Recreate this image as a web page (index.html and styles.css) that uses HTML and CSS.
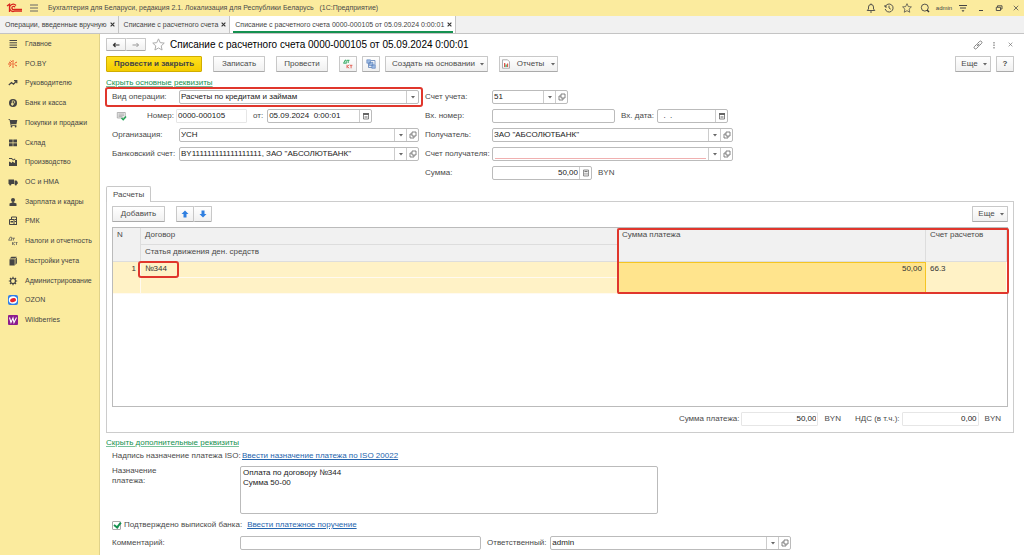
FILE: index.html
```html
<!DOCTYPE html>
<html lang="ru">
<head>
<meta charset="utf-8">
<meta name="viewport" content="width=device-width, initial-scale=1">
<title>Списание с расчетного счета</title>
<link rel="stylesheet" href="styles.css">
</head>
<body>
<svg class="sprite" aria-hidden="true">
  <symbol id="caret" viewBox="0 0 6 6"><path d="M1 2h4L3 4.400z" fill="#666"/></symbol>
  <symbol id="open" viewBox="0 0 8 8"><path d="M3 1h4v4H3zM3 3H1v4h4V5" fill="none" stroke="#666" stroke-width=".8"/></symbol>
  <symbol id="calendar" viewBox="0 0 8 8"><path d="M1.500 1.500h5v5.500h-5z" fill="none" stroke="#666" stroke-width=".8"/><path d="M1 1h6v2H1zM2.500 4h3v.6h-3zM2.500 5.400h3v.6h-3z" fill="#666"/></symbol>
  <symbol id="calc" viewBox="0 0 8 8"><path d="M1.500 1h5v6h-5z" fill="#eee" stroke="#777" stroke-width=".8"/><path d="M2.500 2h3v1h-3zM2.500 4h1v.7h-1zM4.500 4h1v.7h-1zM2.500 5.400h1v.7h-1zM4.500 5.400h1v.7h-1z" fill="#777"/></symbol>
  <symbol id="star" viewBox="0 0 12 12"><path d="M6 .8l1.600 3.500 3.700.4-2.800 2.600.8 3.800L6 9.200l-3.300 1.900.8-3.800L.7 4.700l3.700-.4z" fill="none" stroke="currentColor" stroke-width=".9"/></symbol>
  <symbol id="close" viewBox="0 0 8 8"><path d="M1 1l6 6M7 1L1 7" fill="none" stroke="currentColor"/></symbol>
  <symbol id="close-bold" viewBox="0 0 8 8"><path d="M1 1l6 6M7 1L1 7" fill="none" stroke="currentColor" stroke-width="1.800"/></symbol>
</svg>

<header class="titlebar">
  <svg class="logo" viewBox="0 0 17 10" role="img" aria-label="1С"><path d="M1 3l2.500-1.800V9M10 2.500A3.600 3.600 0 1 0 8.500 8.200H16M9 4.300A1.600 1.600 0 1 0 8 6.500h8" fill="none" stroke="#d9251d" stroke-width="1.300"/></svg>
  <button class="icon-btn" aria-label="Меню"><svg class="i10" viewBox="0 0 10 10"><path d="M1 2h8M1 5h8M1 8h8" stroke="#666" fill="none"/></svg></button>
  <span class="app-title">Бухгалтерия для Беларуси, редакция 2.1. Локализация для Республики Беларусь &nbsp; (1С:Предприятие)</span>
  <nav class="system">
    <button class="icon-btn" aria-label="Уведомления"><svg class="i10" viewBox="0 0 10 10"><path d="M1.200 7.500h7.600L7.500 6V4A2.500 2.500 0 0 0 5 1.500 2.500 2.500 0 0 0 2.500 4v2zM4 9h2M5 .5v1" fill="none" stroke="#444" stroke-width=".9"/></svg></button>
    <button class="icon-btn" aria-label="История"><svg class="i10" viewBox="0 0 10 10"><path d="M1 2v2h2M1.300 3.700A4 4 0 1 1 1.200 6M5 2.700V5l1.800 1.200" fill="none" stroke="#444" stroke-width=".9"/></svg></button>
    <button class="icon-btn" aria-label="Избранное"><svg class="i10"><use href="#star"/></svg></button>
    <button class="icon-btn" aria-label="Поиск"><svg class="i10" viewBox="0 0 10 10"><circle cx="4.800" cy="4.600" r="3.500" fill="none" stroke="#444" stroke-width=".9"/><path d="M7 7l2 2" stroke="#333" stroke-width="1.500"/></svg></button>
    <a class="user" href="#user">admin</a>
    <button class="icon-btn" aria-label="Настройка"><svg class="i10" viewBox="0 0 10 10"><path d="M1 2.500h8M2 5h6" stroke="#444" fill="none"/><path d="M3.500 7.200h3L5 9z" fill="#444"/></svg></button>
    <button class="icon-btn" aria-label="Свернуть"><svg class="i10" viewBox="0 0 10 10"><path d="M3 7.500h4" stroke="#444" fill="none"/></svg></button>
    <button class="icon-btn" aria-label="Восстановить"><svg class="i10" viewBox="0 0 10 10"><path d="M3.500 4V2.800H8V6H6.700M2.300 4.300h4.200v3.200H2.300z" fill="none" stroke="#444" stroke-width=".9"/></svg></button>
    <button class="icon-btn" aria-label="Закрыть"><svg class="i6"><use href="#close"/></svg></button>
  </nav>
</header>

<nav class="tabs">
  <div class="tab"><a href="#t1">Операции, введенные вручную</a><button class="tab-x" aria-label="Закрыть вкладку"><svg class="i5"><use href="#close-bold"/></svg></button></div>
  <div class="tab"><a href="#t2">Списание с расчетного счета</a><button class="tab-x" aria-label="Закрыть вкладку"><svg class="i5"><use href="#close-bold"/></svg></button></div>
  <div class="tab tab-active"><a href="#t3">Списание с расчетного счета 0000-000105 от 05.09.2024 0:00:01</a><button class="tab-x" aria-label="Закрыть вкладку"><svg class="i5"><use href="#close-bold"/></svg></button></div>
</nav>

<div class="body">
<nav class="sidebar">
 <div class="sections">
  <a href="#s1"><svg viewBox="0 0 10 10"><path d="M1.500 1.500h7.500M1.500 3.800h7.500M1.500 6.100h7.500M1.500 8.400h7.500" stroke="#444"/></svg>Главное</a>
  <a href="#s2"><svg viewBox="0 0 10 10"><path d="M5 1v2M5 7v2M1 3l2 1M7 6l2 1M9 3L7 4M3 6L1 7.500M2.500 1.500L4 3M0 5h3" stroke="#e8562a" fill="none"/><circle cx="5" cy="5" r="1.200" fill="none" stroke="#e8562a" stroke-width=".8"/></svg>PO.BY</a>
  <a href="#s3"><svg viewBox="0 0 10 10"><path d="M.8 7l2.700-2.500 2 1.700L8.500 3M6 2.700h2.800v2.600" stroke="#444" stroke-width="1.200" fill="none"/></svg>Руководителю</a>
  <a href="#s4"><svg viewBox="0 0 10 10"><circle cx="5" cy="5" r="4" fill="#444"/><path d="M4.300 8V2.800h1.200a1.300 1.300 0 0 1 0 2.600H3M3 6.500h2.800" stroke="#f9eb9d" stroke-width=".8" fill="none"/></svg>Банк и касса</a>
  <a href="#s5"><svg viewBox="0 0 10 10"><path d="M.5 1h1.300l.5 1h7L8.500 6H3.200l.2.800h5v.9H2.700L1.500 1.800h-1z" fill="#444"/><circle cx="3.500" cy="8.600" r=".9" fill="#444"/><circle cx="7.600" cy="8.600" r=".9" fill="#444"/></svg>Покупки и продажи</a>
  <a href="#s6"><svg viewBox="0 0 10 10"><path d="M1 1.500h3.700v3H1zM5.300 1.500H9v3H5.300zM1 5.200h3.700v3H1zM5.300 5.200H9v3H5.300z" fill="#444"/></svg>Склад</a>
  <a href="#s7"><svg viewBox="0 0 10 10"><path d="M1 9V4.500L4 6V4.500L7 6V3h2v6zM1 1h3l1 1.500 2-1 .5 1-2.500 1-1.500-1.500H1z" fill="#444"/></svg>Производство</a>
  <a href="#s8"><svg viewBox="0 0 10 10"><path d="M.5 2.500H6V7H.5zM6.500 3.500H8.500L9.700 5v2H6.500z" fill="#444"/><circle cx="2.300" cy="7.400" r="1.100" fill="#444"/><circle cx="7.800" cy="7.400" r="1.100" fill="#444"/></svg>ОС и НМА</a>
  <a href="#s9"><svg viewBox="0 0 10 10"><circle cx="5" cy="3" r="2" fill="#444"/><path d="M4.300 4.500h1.400v1l2.800 1V9h-7V6.500l2.800-1z" fill="#444"/></svg>Зарплата и кадры</a>
  <a href="#s10"><svg viewBox="0 0 10 10"><path d="M3.500 3V1H8.500v7.500M3.500 8.500h5.500M1.500 3.500h4.500v5H1.500z" fill="none" stroke="#444"/><path d="M2.500 5h2.500v1.500H2.500zM6.500 3h1.500v1H6.500zM6.500 5h1.500v1H6.500z" fill="#444"/></svg>РМК</a>
  <a href="#s11"><svg viewBox="0 0 10 10"><path d="M.8 4L2 1.200h1.500V4M.3 4.200h4M4 2.200h3M5.500 2.200V4.500M4.500 6v3M7 6L4.700 7.500 7 9M7.500 6.500h2M8.500 6.500V9" fill="none" stroke="#555" stroke-width=".7"/></svg>Налоги и отчетность</a>
  <a href="#s12"><svg viewBox="0 0 10 10"><path d="M1.500 3.200h5.200V9.500H1.500zM1.700 2.600L3.500.8H8.800L7 2.600zM7.400 3l1.500-1.700v6L7.400 9z" fill="#444"/></svg>Настройки учета</a>
  <a href="#s13"><svg viewBox="0 0 10 10"><circle cx="5" cy="5" r="2.500" fill="none" stroke="#444" stroke-width="1.200"/><path d="M5 .8v1.500M5 7.700v1.500M.8 5h1.500M7.700 5h1.500M2 2l1 1M7 7l1 1M8 2L7 3M3 7L2 8" stroke="#444" stroke-width="1.200"/></svg>Администрирование</a>
  <a href="#s14"><svg viewBox="0 0 10 10"><rect width="10" height="10" rx="2" fill="#2f7de8"/><ellipse cx="5" cy="5" rx="4.200" ry="3.700" fill="#fff"/><ellipse cx="5" cy="5.100" rx="3" ry="2" fill="#e8222c" transform="rotate(-18 5 5)"/></svg>OZON</a>
  <a href="#s15"><svg viewBox="0 0 10 10"><rect width="10" height="10" rx="1" fill="#8c1c8e"/><path d="M1.500 2.500L3 7.500 5 3l1 4.500L8.500 2.500" fill="none" stroke="#fff" stroke-width="1.100"/></svg>Wildberries</a>
 </div>
</nav>

<main class="main">
  <div class="heading">
    <div class="btn-pair"><button class="btn" aria-label="Назад"><svg class="i8" viewBox="0 0 8 8"><path d="M7.500 4H1.500M3.500 2l-2 2 2 2" fill="none" stroke="#333" stroke-width="1.200"/></svg></button><button class="btn" aria-label="Вперед"><svg class="i8" viewBox="0 0 8 8"><path d="M.5 4h6M4.500 2l2 2-2 2" fill="none" stroke="#999"/></svg></button></div>
    <button class="icon-btn fav" aria-label="В избранное"><svg class="i12"><use href="#star"/></svg></button>
    <h1>Списание с расчетного счета 0000-000105 от 05.09.2024 0:00:01</h1>
    <div class="window-tools">
      <button class="icon-btn" aria-label="Ссылка"><svg class="i10" viewBox="0 0 10 10"><path d="M4 6.200l2.500-2.500M4.500 3.500l2-2a1.400 1.400 0 0 1 2 2l-2 2a1.400 1.400 0 0 1-2 0M5.500 6.500l-2 2a1.400 1.400 0 0 1-2-2l2-2a1.400 1.400 0 0 1 2 0" fill="none" stroke="#666" stroke-width=".8"/></svg></button>
      <button class="icon-btn" aria-label="Ещё"><svg class="i10" viewBox="0 0 10 10"><path d="M4.500 2h1v1.500h-1zM4.500 4.500h1V6h-1zM4.500 7h1v1.500h-1z" fill="#666"/></svg></button>
      <button class="icon-btn" aria-label="Закрыть форму"><svg class="i5"><use href="#close"/></svg></button>
    </div>
  </div>

  <div class="toolbar">
    <button class="btn btn-main">Провести и закрыть</button>
    <button class="btn wide">Записать</button>
    <button class="btn wide">Провести</button>
    <button class="btn square" aria-label="Дт Кт"><svg class="i10" viewBox="0 0 10 10"><path d="M.8 4L2 1.200h1.200V4M.3 4.200h3.400M4 1.300h2.500M5.200 1.300V4" fill="none" stroke="#23a455" stroke-width=".9"/><path d="M4 5.800v3.400M6.200 5.800L4.200 7.500l2 1.700M6.800 6.300h2.600M8.100 6.300v3" fill="none" stroke="#e2574c" stroke-width=".9"/></svg></button>
    <button class="btn square tight" aria-label="Структура"><svg class="i10" viewBox="0 0 10 10"><path d="M2.500 4v4.500H6M5 1.500h4v4" fill="none" stroke="#5a80b8" stroke-width=".8"/><path d="M.8.800h3.700v3.400H.8zM3.300 3.300H7v3.400H3.300zM5.800 5.800h3.500v3.500H5.800z" fill="#9dbce4" stroke="#5a80b8" stroke-width=".6"/></svg></button>
    <button class="btn tight create">Создать на основании<svg class="i6"><use href="#caret"/></svg></button>
    <button class="btn reports"><svg class="i10" viewBox="0 0 10 10"><path d="M1.500.8h5L8.500 2.800v6.400h-7z" fill="#fff" stroke="#999" stroke-width=".8"/><path d="M3 4h1.300v4H3z" fill="#e2574c"/><path d="M4.500 5.500h1.200V8H4.500z" fill="#23a455"/><path d="M6 4.500h1.200V8H6z" fill="#e2574c"/></svg>Отчеты<svg class="i6"><use href="#caret"/></svg></button>
    <div class="toolbar-end"><button class="btn more">Еще<svg class="i6"><use href="#caret"/></svg></button><button class="btn square help">?</button></div>
  </div>

  <a class="fold" href="#main-fields">Скрыть основные реквизиты</a>

  <form class="requisites">
    <div class="col left">
      <div class="row marked"><label for="op">Вид операции:</label>
        <span class="field grow"><select id="op"><option>Расчеты по кредитам и займам</option></select><span class="cell"><svg class="i6"><use href="#caret"/></svg></span></span></div>
      <div class="row number-row"><svg class="status" viewBox="0 0 10 10"><path d="M.8 1.500h8v5.500h-8zM2 3h5.500M2 4.300h5.500M2 5.600h4" fill="#eee" stroke="#999" stroke-width=".7"/><path d="M5 7l1.700 1.700L9.500 5.500" fill="none" stroke="#23a455" stroke-width="1.500"/></svg>
        <label class="number-label" for="num">Номер:</label><input class="readonly num" id="num" value="0000-000105" readonly>
        <label class="inline" for="date">от:</label><span class="field grow"><input id="date" value="05.09.2024  0:00:01"><button type="button" class="cell" aria-label="Календарь"><svg class="i8"><use href="#calendar"/></svg></button></span><span class="tail"></span></div>
      <div class="row"><label for="org">Организация:</label><span class="field grow"><select id="org"><option>УСН</option></select><span class="cell"><svg class="i6"><use href="#caret"/></svg></span><button type="button" class="cell" aria-label="Открыть"><svg class="i8"><use href="#open"/></svg></button></span></div>
      <div class="row"><label for="acc">Банковский счет:</label><span class="field grow"><select id="acc"><option>BY111111111111111111, ЗАО "АБСОЛЮТБАНК"</option></select><span class="cell"><svg class="i6"><use href="#caret"/></svg></span><button type="button" class="cell" aria-label="Открыть"><svg class="i8"><use href="#open"/></svg></button></span></div>
    </div>
    <div class="col right">
      <div class="row"><label for="ledger">Счет учета:</label><span class="field ledger"><select id="ledger"><option>51</option></select><span class="cell"><svg class="i6"><use href="#caret"/></svg></span><button type="button" class="cell" aria-label="Открыть"><svg class="i8"><use href="#open"/></svg></button></span></div>
      <div class="row"><label for="innum">Вх. номер:</label><span class="field grow"><input id="innum"></span><label class="inline in-date" for="indate">Вх. дата:</label><span class="field indate"><input id="indate" value="  .  ."><button type="button" class="cell" aria-label="Календарь"><svg class="i8"><use href="#calendar"/></svg></button></span><span class="tail-small"></span></div>
      <div class="row"><label for="payee">Получатель:</label><span class="field grow"><select id="payee"><option>ЗАО "АБСОЛЮТБАНК"</option></select><span class="cell"><svg class="i6"><use href="#caret"/></svg></span><button type="button" class="cell" aria-label="Открыть"><svg class="i8"><use href="#open"/></svg></button></span></div>
      <div class="row"><label for="payacc">Счет получателя:</label><span class="field grow"><select id="payacc" class="required"><option></option></select><span class="cell"><svg class="i6"><use href="#caret"/></svg></span><button type="button" class="cell" aria-label="Открыть"><svg class="i8"><use href="#open"/></svg></button></span></div>
      <div class="row"><label for="sum">Сумма:</label><span class="field sum"><input class="num-right" id="sum" value="50,00"><button type="button" class="cell" aria-label="Калькулятор"><svg class="i8"><use href="#calc"/></svg></button></span><span class="unit">BYN</span></div>
    </div>
  </form>

  <section class="payments">
    <button class="page-tab">Расчеты</button>
    <div class="panel">
      <div class="panel-tools">
        <button class="btn add">Добавить</button>
        <div class="btn-pair arrows"><button class="btn" aria-label="Вверх"><svg class="i8" viewBox="0 0 8 8"><path d="M4 .5L7.500 4H5.500v3.500h-3V4H.5z" fill="#2f7fe0"/></svg></button><button class="btn" aria-label="Вниз"><svg class="i8" viewBox="0 0 8 8"><path d="M4 7.500L.5 4h2V.5h3V4h2z" fill="#2f7fe0"/></svg></button></div>
        <div class="toolbar-end"><button class="btn more">Еще<svg class="i6"><use href="#caret"/></svg></button></div>
      </div>
      <div class="grid-box">
        <table class="grid">
          <colgroup><col class="c-n"><col class="c-doc"><col class="c-sum"><col class="c-acc"></colgroup>
          <thead>
            <tr><th rowspan="2">N</th><th>Договор</th><th rowspan="2">Сумма платежа</th><th rowspan="2">Счет расчетов</th></tr>
            <tr><th>Статья движения ден. средств</th></tr>
          </thead>
          <tbody>
            <tr><td class="num-right" rowspan="2">1</td><td class="contract">№344</td><td class="num-right active-cell" rowspan="2">50,00</td><td rowspan="2">66.3</td></tr>
            <tr><td></td></tr>
          </tbody>
        </table>
        <span class="mark mark-sum"></span>
      </div>
      <div class="totals">
        <label for="tsum">Сумма платежа:</label><input class="readonly num-right" id="tsum" value="50,00" readonly><span class="unit">BYN</span>
        <label for="tvat">НДС (в т.ч.):</label><input class="readonly num-right" id="tvat" value="0,00" readonly><span class="unit">BYN</span>
      </div>
    </div>
  </section>

  <a class="fold fold-extra" href="#extra">Скрыть дополнительные реквизиты</a>
  <form class="extra">
    <div class="line iso"><span>Надпись назначение платежа ISO:</span><a href="#iso">Ввести назначение платежа по ISO 20022</a></div>
    <div class="line purpose"><label for="purpose">Назначение<br>платежа:</label><textarea id="purpose">Оплата по договору №344
Сумма 50-00</textarea></div>
    <div class="line confirm"><input type="checkbox" id="ok" checked><label for="ok">Подтверждено выпиской банка:</label><a href="#order">Ввести платежное поручение</a></div>
    <div class="line comment"><label for="comment">Комментарий:</label><span class="field comment-field"><input id="comment"></span><label class="inline" for="resp">Ответственный:</label><span class="field resp"><select id="resp"><option>admin</option></select><span class="cell"><svg class="i6"><use href="#caret"/></svg></span><button type="button" class="cell" aria-label="Открыть"><svg class="i8"><use href="#open"/></svg></button></span></div>
  </form>
</main>
</div>
</body>
</html>
```
FILE: styles.css
```css
*, *::before, *::after { box-sizing: border-box; }
html, body { margin: 0; }
body {
  min-height: 100vh;
  display: flex;
  flex-direction: column;
  background: #fff;
  color: #4a4a4a;
  font: 8px/10px "Liberation Sans", Arial, sans-serif;
}
button, input, select, textarea { font: inherit; color: inherit; margin: 0; }
button { cursor: pointer; }
.sprite { position: absolute; width: 0; height: 0; }
svg { flex: none; display: block; }
.i5 { width: 5px; height: 5px; }
.i6 { width: 6px; height: 6px; }
.i8 { width: 8px; height: 8px; }
.i10 { width: 10px; height: 10px; }
.i12 { width: 13px; height: 13px; }
.icon-btn {
  display: flex; align-items: center; justify-content: center;
  width: 18px; height: 14px; padding: 0; border: 0; background: none;
}

/* Title bar */
.titlebar { display: flex; align-items: center; height: 16px; padding-left: 6px; background: #fbeb9e; }
.logo { width: 17px; height: 10px; margin-right: 2px; }
.app-title { margin-left: 5px; white-space: nowrap; font-size: 7px; }
.system { display: flex; align-items: center; margin-left: auto; }
.system .icon-btn:last-child { width: 16px; }
.user { width: 20px; text-align: center; color: #444; font-size: 6px; text-decoration: none; }

/* Open windows */
.tabs { display: flex; height: 18px; background: #f1f1f1; border-bottom: 1px solid #c4c4c4; }
.tab { display: flex; align-items: center; gap: 3px; padding: 0 3px 0 5px; border-right: 1px solid #c4c4c4; font-size: 7px; white-space: nowrap; }
.tab a { color: #444; text-decoration: none; }
.tab-active { background: linear-gradient(#159150, #159150) 3px 100% / calc(100% - 5px) 2px no-repeat #fff; }
.tab-x { padding: 0; border: 0; background: none; color: #333; }

.body { display: flex; flex: 1; }

/* Sections */
.sidebar {
  flex: none; width: 100px; border-right: 1px solid #e0d28a; background: #fbeb9e;
  font-size: 7px;
}
.sections { display: grid; grid-auto-rows: 1fr; min-height: 296px; }
.sidebar a { display: flex; align-items: center; gap: 7px; padding-left: 8px; color: #444; text-decoration: none; white-space: nowrap; }
.sidebar svg { width: 10px; height: 10px; }

.main { flex: 1; min-width: 0; padding: 4px 10px 6px 6px; display: flex; flex-direction: column; }
.heading { display: flex; align-items: center; height: 13px; }
.heading h1 { margin: 0; font-size: 10px; font-weight: 400; color: #000; white-space: nowrap; }
.window-tools { display: flex; margin: 0 -4px 0 auto; color: #666; }
.window-tools .icon-btn { width: 16px; }
.fav { width: 24px; color: #aaa; }

/* Buttons */
.btn {
  display: flex; align-items: center; justify-content: center; gap: 6px;
  height: 16px; padding: 0 8px; border: 1px solid #c8c8c8; border-bottom-color: #aaa; border-radius: 1px;
  background: linear-gradient(#fff, #f0f0f0); white-space: nowrap;
}
.btn-pair { display: flex; }
.btn-pair .btn { width: 20px; height: 13px; padding: 0; }
.btn-pair .btn + .btn { border-left: 0; }
.btn-pair.arrows .btn { width: 18px; height: 16px; }
.toolbar { display: flex; gap: 11px; margin-top: 5px; }
.btn-main { width: 96px; border-color: #d1ad00; background: linear-gradient(#ffe11e, #f3cc00); color: #444; font-weight: 700; }
.wide { width: 52px; }
.square { width: 18px; padding: 0; }
.tight { margin-left: -6px; }
.create { width: 103px; padding: 0 2px 0 6px; gap: 4px; }
.reports { width: 59px; padding: 0; }
.toolbar-end { display: flex; gap: 5px; margin-left: auto; }
.more { width: 36px; padding: 0 0 0 3px; gap: 4px; }
.help { font-weight: 700; }
.fold { align-self: flex-start; margin-top: 6px; color: #159150; text-decoration: underline; text-decoration-color: #79c39c; }
.fold-extra { margin-top: 5px; }

/* Fields */
.requisites { display: flex; gap: 6px; margin-top: 2px; padding-left: 6px; }
.col { display: flex; flex-direction: column; gap: 5px; }
.left { flex: 0 1 307px; }
.right { flex: 0 1 308px; }
.row { position: relative; display: flex; align-items: center; height: 14px; white-space: nowrap; }
.row > label { flex: none; width: 67px; }
.row > .inline { width: auto; margin: 0 4px 0 6px; }
.row > .in-date { margin-right: 3px; }
.field { display: flex; height: 14px; border: 1px solid #bbb; border-radius: 2px; background: #fff; }
.field input, .field select { flex: 1; min-width: 0; width: 100%; padding: 0 1px; border: 0; background: none; color: #222; appearance: none; outline-offset: 1px; white-space: pre; }
.grow { flex: 1; min-width: 0; }
.cell { display: flex; flex: none; align-items: center; justify-content: center; width: 12px; padding: 0; border: 0; border-left: 1px solid #ccc; background: none; }
.readonly { height: 14px; padding: 0 1px 1px; border: 1px solid #e6e6e6; border-radius: 1px; background: #fff; color: #222; }
.status { width: 11px; height: 10px; margin: 0 20px 0 4px; }
.row > .number-label { width: 29px; }
.num { width: 71px; }
.tail { width: 47px; }
.tail-small { width: 5px; }
.ledger { width: 76px; }
.indate { width: 71px; }
.sum { width: 100px; }
.num-right, .field .num-right { text-align: right; }
.unit { margin-left: 6px; }
.field .required { margin: 0 2px 1px; border-bottom: 1px solid #f0b0b0; border-radius: 0; }
.marked::before {
  content: ""; position: absolute; inset: -3px -4px -3px -7px;
  border: 2px solid #e0362c; border-radius: 3px; pointer-events: none;
}

/* Payments */
.payments { margin-top: 6px; }
.page-tab { position: relative; display: block; height: 16px; padding: 0 6px; border: 1px solid #c8c8c8; border-bottom: 0; border-radius: 2px 2px 0 0; background: #fff; }
.panel { margin-top: -1px; padding: 4px 5px 6px; border: 1px solid #ccc; }
.panel-tools { display: flex; gap: 11px; }
.add { width: 53px; }
.grid-box { position: relative; min-height: 180px; margin-top: 5px; border: 1px solid #bbb; }
.grid { width: 100%; table-layout: fixed; border-collapse: separate; border-spacing: 0; }
.c-n { width: 28px; }
.c-sum { width: 308px; }
.c-acc { width: 81px; }
.grid th, .grid td { height: 17px; padding: 2px 4px; text-align: left; vertical-align: top; font-weight: 400; }
.grid th { background: #f1f1f1; border-right: 1px solid #ddd; border-bottom: 1px solid #ddd; }
.grid td { height: 16px; background: #fff2c6; border-right: 1px solid #fffaf0; border-bottom: 1px solid #fffaf0; color: #333; }
.grid td.num-right { text-align: right; }
.grid td.active-cell { padding: 1px 3px 2px; background: #ffe48d; border: 1px solid #f5c522; }
.grid .contract { position: relative; }
.contract::after { content: ""; position: absolute; left: -3px; top: -1px; width: 41px; height: 17px; border: 2px solid #e0362c; border-radius: 3px; }
.mark { position: absolute; border: 2px solid #e0362c; border-radius: 2px; pointer-events: none; }
.mark-sum { right: -2px; top: 0; width: 392px; height: 66px; }
.totals { display: flex; align-items: center; justify-content: flex-end; margin-top: 5px; padding-right: 7px; }
.totals label { margin: 0 2px 0 14px; }
.totals .readonly { width: 77px; }

/* Extra */
.extra { display: flex; flex-direction: column; padding-left: 6px; margin-top: 3px; }
.line { display: flex; align-items: center; }
.line a { color: #2565ae; }
.iso span, .purpose label, .comment > label:first-child { width: 128px; flex: none; white-space: nowrap; }
.iso a { margin-left: 2px; }
.purpose { align-items: flex-start; margin-top: 5px; }
.purpose textarea { flex: 0 1 418px; height: 48px; padding: 1px 2px; border: 1px solid #bbb; border-radius: 2px; color: #222; resize: none; }
.confirm { margin-top: 6px; }
.confirm input {
  position: relative; appearance: none; width: 9px; height: 9px; margin-right: 3px; border: 1px solid #aaa; border-radius: 1px;
}
.confirm input:checked::after { content: ""; position: absolute; left: 2px; top: -1px; width: 5px; height: 7px; border: solid #159150; border-width: 0 2px 2px 0; transform: rotate(38deg); }
.confirm a { margin-left: 5px; }
.comment { margin-top: 6px; }
.comment-field { flex: 0 1 241px; }
.line > .inline { margin: 0 4px 0 6px; }
.resp { flex: 0 1 241px; }
```
